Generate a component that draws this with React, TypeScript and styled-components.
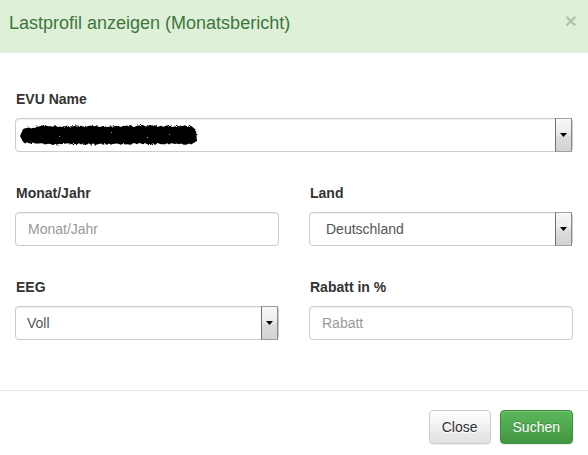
import React from "react";
import styled, { createGlobalStyle } from "styled-components";

// Styles
const GlobalStyle = createGlobalStyle`
  html, body {
    margin: 0;
    padding: 0;
    background: #fff;
  }
  body {
    font-family: "Liberation Sans", Arial, sans-serif;
    font-size: 14px;
    line-height: 20px;
    color: #333;
  }
  * {
    box-sizing: border-box;
  }
`;

const Modal = styled.div`
  width: 588px;
  height: 455px;
  background: #fff;
  overflow: hidden;
`;

const Header = styled.div`
  display: flex;
  align-items: flex-start;
  justify-content: space-between;
  height: 53px;
  padding: 10px 11px 0 9px;
  background: #dff0d8;
  border-bottom: 1px solid #e5e5e5;
`;

const Title = styled.h4`
  margin: 0;
  font-size: 18px;
  line-height: 26px;
  font-weight: normal;
  color: #3c763d;
`;

const CloseX = styled.button`
  margin: 0;
  padding: 0;
  border: 0;
  background: transparent;
  font-family: "Liberation Sans", Arial, sans-serif;
  font-size: 21px;
  font-weight: bold;
  line-height: 1;
  color: #000;
  opacity: 0.2;
  text-shadow: 0 1px 0 #fff;
  cursor: pointer;
`;

const Body = styled.div`
  padding: 36px 15px 50px;
`;

const Row = styled.div`
  display: grid;
  grid-template-columns: 1fr 1fr;
  column-gap: 30px;
  margin-top: 31px;
`;

const FormGroup = styled.div``;

const Label = styled.label`
  display: block;
  margin: 0 0 9px 1px;
  font-weight: bold;
  font-size: 14px;
  line-height: 20px;
  color: #333;
`;

const Input = styled.input`
  display: block;
  width: 100%;
  height: 34px;
  padding: 6px 12px;
  font-family: "Liberation Sans", Arial, sans-serif;
  font-size: 14px;
  line-height: 20px;
  color: #555;
  background: #fff;
  border: 1px solid #ccc;
  border-radius: 4px;
  box-shadow: inset 0 1px 1px rgba(0, 0, 0, 0.075);
  outline: none;
  &::placeholder {
    color: #999;
  }
`;

const Select = styled.div<{ $indent: number }>`
  display: flex;
  align-items: center;
  height: 34px;
  padding-left: ${p => p.$indent}px;
  font-size: 14px;
  color: #555;
  background: #fff;
  border: 1px solid #ccc;
  border-radius: 4px;
  box-shadow: inset 0 1px 1px rgba(0, 0, 0, 0.075);
`;

const SelectValue = styled.span`
  flex: 1;
  display: flex;
  align-items: center;
  white-space: nowrap;
  overflow: hidden;
`;

const ArrowBox = styled.span`
  align-self: stretch;
  display: flex;
  align-items: center;
  justify-content: center;
  width: 17px;
  margin: -1px 0;
  border: 1px solid #a0a0a0;
  border-left-color: #707070;
  border-right-color: #8a8a8a;
  background: linear-gradient(#f7f7f7 0%, #ececec 45%, #dddddd 55%, #d2d2d2 100%);
`;

const Footer = styled.div`
  display: flex;
  justify-content: flex-end;
  gap: 9px;
  padding: 19px 15px 15px;
  border-top: 1px solid #e5e5e5;
`;

const Button = styled.button<{ $primary?: boolean }>`
  height: 34px;
  padding: 6px 12px;
  font-family: "Liberation Sans", Arial, sans-serif;
  font-size: 14px;
  line-height: 20px;
  border-radius: 4px;
  cursor: pointer;
  color: ${p => (p.$primary ? "#fff" : "#333")};
  text-shadow: ${p => (p.$primary ? "0 -1px 0 rgba(0,0,0,.2)" : "0 1px 0 #fff")};
  border: 1px solid ${p => (p.$primary ? "#3e8f3e" : "#ccc")};
  background: ${p =>
    p.$primary
      ? "linear-gradient(#5cb85c 0%, #419641 100%)"
      : "linear-gradient(#fff 0%, #e0e0e0 100%)"};
  box-shadow: inset 0 1px 0 rgba(255, 255, 255, 0.15), 0 1px 1px rgba(0, 0, 0, 0.075);
`;

// Drawings
const Caret = () => (
  <svg width="7" height="4" viewBox="0 0 7 4">
    <polygon points="0,0 7,0 3.5,4" fill="#000" />
  </svg>
);

// redacted name, scribbled over in the original
const scribble = (() => {
  let seed = 11;
  const rnd = () => {
    seed = (seed * 9301 + 49297) % 233280;
    return seed / 233280;
  };
  const top: string[] = [];
  const bottom: string[] = [];
  for (let x = 4; x <= 172; x += 2) {
    const taper = x < 24 ? (24 - x) * 0.15 : 0;
    top.push(`${x},${(3 + taper + rnd() * 2).toFixed(1)}`);
    bottom.push(`${x},${(23 - taper * 0.5 - rnd() * 2).toFixed(1)}`);
  }
  return `M1,14 L${top.join(" L")} L177,8 L178,19 L${bottom.reverse().join(" L")} Z`;
})();

const Redacted = () => (
  <svg width="180" height="26" viewBox="0 0 180 26">
    <defs>
      <filter id="rough" x="-5%" y="-20%" width="110%" height="140%">
        <feTurbulence type="fractalNoise" baseFrequency="0.9" numOctaves="2" seed="3" />
        <feDisplacementMap in="SourceGraphic" scale="2.5" />
      </filter>
    </defs>
    <path d={scribble} fill="#000" filter="url(#rough)" />
    <rect x="40" y="14" width="1" height="1" fill="#5a7fb0" />
    <rect x="92" y="10" width="1" height="1" fill="#c48a4a" />
    <rect x="128" y="15" width="1" height="1" fill="#7aa0d0" />
    <rect x="150" y="12" width="1" height="1" fill="#b09060" />
  </svg>
);

const App = () => {
  return (
    <Modal>
      <GlobalStyle />
      <Header>
        <Title>Lastprofil anzeigen (Monatsbericht)</Title>
        <CloseX type="button">×</CloseX>
      </Header>
      <Body>
        <FormGroup>
          <Label>EVU Name</Label>
          <Select $indent={3}>
            <SelectValue>
              <Redacted />
            </SelectValue>
            <ArrowBox>
              <Caret />
            </ArrowBox>
          </Select>
        </FormGroup>
        <Row>
          <FormGroup>
            <Label>Monat/Jahr</Label>
            <Input placeholder="Monat/Jahr" />
          </FormGroup>
          <FormGroup>
            <Label>Land</Label>
            <Select $indent={16}>
              <SelectValue>Deutschland</SelectValue>
              <ArrowBox>
                <Caret />
              </ArrowBox>
            </Select>
          </FormGroup>
        </Row>
        <Row>
          <FormGroup>
            <Label>EEG</Label>
            <Select $indent={11}>
              <SelectValue>Voll</SelectValue>
              <ArrowBox>
                <Caret />
              </ArrowBox>
            </Select>
          </FormGroup>
          <FormGroup>
            <Label>Rabatt in %</Label>
            <Input placeholder="Rabatt" />
          </FormGroup>
        </Row>
      </Body>
      <Footer>
        <Button type="button">Close</Button>
        <Button type="button" $primary>
          Suchen
        </Button>
      </Footer>
    </Modal>
  );
};

export default App;
